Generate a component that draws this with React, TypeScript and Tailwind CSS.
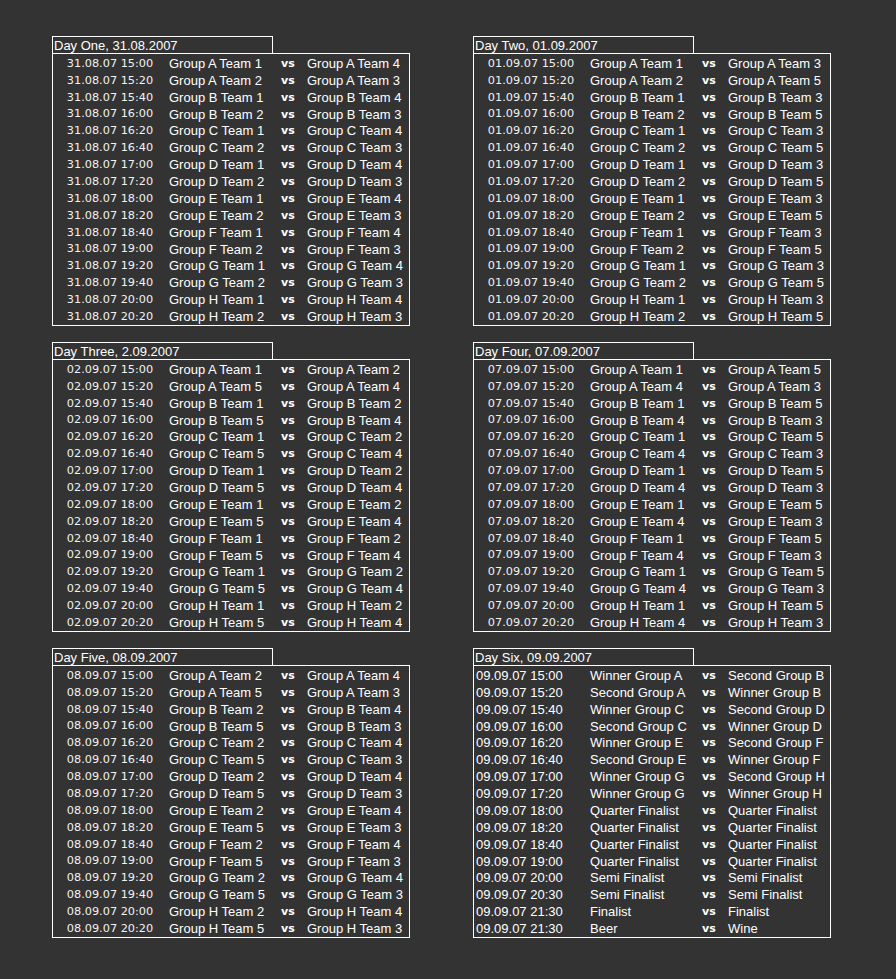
const times = [
  '15:00', '15:20', '15:40', '16:00', '16:20', '16:40', '17:00', '17:20',
  '18:00', '18:20', '18:40', '19:00', '19:20', '19:40', '20:00', '20:20',
]
const groups = ['A', 'B', 'C', 'D', 'E', 'F', 'G', 'H']

type Match = { time: string; home: string; away: string }

interface Day {
  title: string
  date: string
  pairs: [number, number][]
}

const groupDays: Day[] = [
  { title: 'Day One, 31.08.2007', date: '31.08.07', pairs: [[1, 4], [2, 3]] },
  { title: 'Day Two, 01.09.2007', date: '01.09.07', pairs: [[1, 3], [2, 5]] },
  { title: 'Day Three, 2.09.2007', date: '02.09.07', pairs: [[1, 2], [5, 4]] },
  { title: 'Day Four, 07.09.2007', date: '07.09.07', pairs: [[1, 5], [4, 3]] },
  { title: 'Day Five, 08.09.2007', date: '08.09.07', pairs: [[2, 4], [5, 3]] },
]

function buildGroupDay(day: Day): Match[] {
  const rows: Match[] = []
  groups.forEach((g, gi) => {
    day.pairs.forEach(([a, b], pi) => {
      rows.push({
        time: `${day.date} ${times[gi * 2 + pi]}`,
        home: `Group ${g} Team ${a}`,
        away: `Group ${g} Team ${b}`,
      })
    })
  })
  return rows
}

const finals: [string, string, string][] = [
  ['15:00', 'Winner Group A', 'Second Group B'],
  ['15:20', 'Second Group A', 'Winner Group B'],
  ['15:40', 'Winner Group C', 'Second Group D'],
  ['16:00', 'Second Group C', 'Winner Group D'],
  ['16:20', 'Winner Group E', 'Second Group F'],
  ['16:40', 'Second Group E', 'Winner Group F'],
  ['17:00', 'Winner Group G', 'Second Group H'],
  ['17:20', 'Winner Group G', 'Winner Group H'],
  ['18:00', 'Quarter Finalist', 'Quarter Finalist'],
  ['18:20', 'Quarter Finalist', 'Quarter Finalist'],
  ['18:40', 'Quarter Finalist', 'Quarter Finalist'],
  ['19:00', 'Quarter Finalist', 'Quarter Finalist'],
  ['20:00', 'Semi Finalist', 'Semi Finalist'],
  ['20:30', 'Semi Finalist', 'Semi Finalist'],
  ['21:30', 'Finalist', 'Finalist'],
  ['21:30', 'Beer', 'Wine'],
]

const daySix: Match[] = finals.map(([t, home, away]) => ({ time: `09.09.07 ${t}`, home, away }))

const arial = "font-['Liberation_Sans',Arial,sans-serif]"
const verdana = "font-['DejaVu_Sans',Verdana,sans-serif]"

function DayPanel({ title, rows, plainDate }: { title: string; rows: Match[]; plainDate?: boolean }) {
  return (
    <div className="flex flex-col">
      <div className={`w-[221px] h-[18px] border border-white pl-px pt-px text-[13px] leading-[15px] text-white ${arial}`}>
        {title}
      </div>
      <div className="-mt-px h-[273px] border border-white flex flex-col pt-px">
        {rows.map((r, i) => (
          <div key={i} className="flex-1 grid grid-cols-[114px_111px_26px_1fr] items-center text-white">
            {plainDate ? (
              <span className={`pl-[2px] text-[13px] leading-none ${arial}`}>{r.time}</span>
            ) : (
              <span className={`text-center text-[11.3px] leading-none text-[#f2f2f2] ${verdana}`}>{r.time}</span>
            )}
            <span className={`pl-[2px] text-[13px] leading-none whitespace-nowrap ${arial}`}>{r.home}</span>
            <span className={`pl-[3px] text-[11px] font-bold leading-none ${verdana}`}>vs</span>
            <span className={`pl-[3px] text-[13px] leading-none whitespace-nowrap ${arial}`}>{r.away}</span>
          </div>
        ))}
      </div>
    </div>
  )
}

export default function App() {
  return (
    <div className="min-h-[979px] bg-[#333333] pl-[52px] pt-[36px]">
      <div className="grid grid-cols-[358px_358px] gap-x-[63px] gap-y-4">
        {groupDays.map((d) => (
          <DayPanel key={d.title} title={d.title} rows={buildGroupDay(d)} />
        ))}
        <DayPanel title="Day Six, 09.09.2007" rows={daySix} plainDate />
      </div>
    </div>
  )
}
